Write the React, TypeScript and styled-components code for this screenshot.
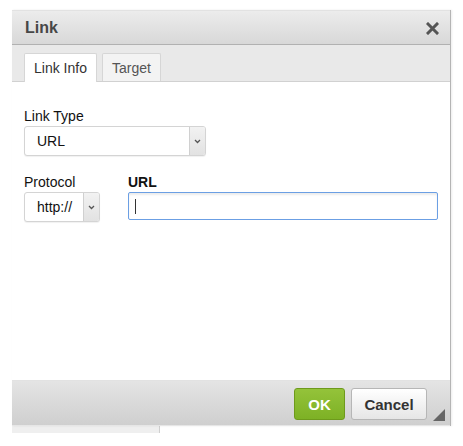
import React from "react";
import styled, { createGlobalStyle } from "styled-components";

const Global = createGlobalStyle`
  html, body { margin: 0; padding: 0; background: #fff; }
  body { font-family: "Liberation Sans", Arial, sans-serif; }
`;

const Page = styled.div`
  padding: 10px 0 0 12px;
`;

const Dialog = styled.div`
  position: relative;
  width: 438px;
  border-right: 1px solid #b4b4b4;
  box-shadow: 1px 0 2px rgba(0, 0, 0, 0.08);
  display: flex;
  flex-direction: column;
`;

const TitleBar = styled.div`
  height: 33px;
  border-top: 1px solid #e2e2e2;
  border-bottom: 1px solid #b1b1b1;
  background: linear-gradient(#ececec, #d8d8d8);
  display: flex;
  align-items: center;
  justify-content: space-between;
  padding: 0 11px 0 13px;
`;

const Title = styled.div`
  font-size: 16px;
  font-weight: bold;
  color: #474747;
  margin-top: 1px;
`;

const Close = styled.svg`
  width: 13px;
  height: 13px;
  margin-top: 2px;
`;

const TabBar = styled.div`
  height: 29px;
  padding-top: 7px;
  padding-left: 12px;
  background: #e9e9e9;
  border-bottom: 1px solid #d1d1d1;
  display: flex;
  gap: 5px;
  align-items: flex-end;
`;

const Tab = styled.div<{ $active?: boolean }>`
  height: ${(p) => (p.$active ? 29 : 28)}px;
  box-sizing: border-box;
  padding: 0 9px;
  display: flex;
  align-items: center;
  font-size: 14px;
  color: ${(p) => (p.$active ? "#333" : "#555")};
  background: ${(p) => (p.$active ? "#fff" : "#f3f3f3")};
  border: 1px solid #d6d6d6;
  border-bottom: none;
  margin-bottom: ${(p) => (p.$active ? -1 : 0)}px;
  border-radius: 2px 2px 0 0;
  position: relative;
`;

const Body = styled.div`
  height: 296px;
  background: #fff;
  padding: 26px 12px 0 12px;
  box-sizing: border-box;
`;

const Label = styled.div<{ $bold?: boolean }>`
  font-size: 14px;
  line-height: 16px;
  color: #111;
  font-weight: ${(p) => (p.$bold ? "bold" : "normal")};
  margin-bottom: 2px;
`;

const Field = styled.div``;

const Row = styled.div`
  display: flex;
  gap: 28px;
  margin-top: 18px;
`;

const Select = styled.div<{ $w: number }>`
  width: ${(p) => p.$w}px;
  height: 30px;
  box-sizing: border-box;
  border: 1px solid #d4d4d4;
  border-radius: 3px;
  display: flex;
  background: #fff;
  box-shadow: 0 1px 1px rgba(0, 0, 0, 0.06);
  overflow: hidden;
`;

const SelectText = styled.div`
  flex: 1;
  display: flex;
  align-items: center;
  padding-left: 12px;
  font-size: 14px;
  color: #111;
`;

const Arrow = styled.div`
  width: 15px;
  border-left: 1px solid #d0d0d0;
  background: linear-gradient(#f2f2f2, #e2e2e2);
  display: flex;
  align-items: center;
  justify-content: center;
`;

const Input = styled.div`
  width: 310px;
  height: 28px;
  box-sizing: border-box;
  border: 1px solid #6b9fe4;
  border-radius: 2px;
  box-shadow: inset 0 2px 2px rgba(0, 0, 0, 0.08);
  display: flex;
  align-items: center;
  padding-left: 6px;
`;

const Caret = styled.div`
  width: 1px;
  height: 15px;
  background: #333;
`;

const Footer = styled.div`
  border-top: 1px solid #e2e2e2;
  border-bottom: 1px solid #e6e6e6;
  margin-top: 2px;
  height: 44px;
  background: linear-gradient(#e4e4e4, #cfcfcf);
  display: flex;
  align-items: center;
  justify-content: flex-end;
  gap: 6px;
  padding-right: 23px;
  position: relative;
`;

const Button = styled.div<{ $primary?: boolean }>`
  height: 32px;
  box-sizing: border-box;
  border-radius: 3px;
  display: flex;
  align-items: center;
  font-size: 15px;
  font-weight: bold;
  color: ${(p) => (p.$primary ? "#fff" : "#333")};
  border: 1px solid ${(p) => (p.$primary ? "#6e9a1c" : "#b6b6b6")};
  background: ${(p) =>
    p.$primary
      ? "linear-gradient(#94c33a, #7db125)"
      : "linear-gradient(#ffffff, #e6e6e6)"};
  width: ${(p) => (p.$primary ? 51 : 76)}px;
  justify-content: center;
  margin-top: 2px;
`;

const Resizer = styled.div`
  position: absolute;
  right: 5px;
  bottom: 4px;
  width: 0;
  height: 0;
  border-left: 12px solid transparent;
  border-bottom: 12px solid #666;
`;

const Strip = styled.div`
  width: 147px;
  height: 7px;
  background: #efefef;
  border-right: 1px solid #cfcfcf;
`;

const Chevron = () => (
  <svg width="7" height="5" viewBox="0 0 7 5">
    <path d="M1 1 L3.5 3.5 L6 1" fill="none" stroke="#555" strokeWidth="1.3" />
  </svg>
);

export default function App() {
  return (
    <>
      <Global />
      <Page>
        <Dialog>
          <TitleBar>
            <Title>Link</Title>
            <Close viewBox="0 0 13 13">
              <path d="M2 2 L11 11 M11 2 L2 11" stroke="#555" strokeWidth="3" strokeLinecap="square" />
            </Close>
          </TitleBar>
          <TabBar>
            <Tab $active>Link Info</Tab>
            <Tab>Target</Tab>
          </TabBar>
          <Body>
            <Field>
              <Label>Link Type</Label>
              <Select $w={182}>
                <SelectText>URL</SelectText>
                <Arrow>
                  <Chevron />
                </Arrow>
              </Select>
            </Field>
            <Row>
              <Field>
                <Label>Protocol</Label>
                <Select $w={76}>
                  <SelectText>http://</SelectText>
                  <Arrow>
                    <Chevron />
                  </Arrow>
                </Select>
              </Field>
              <Field>
                <Label $bold>URL</Label>
                <Input>
                  <Caret />
                </Input>
              </Field>
            </Row>
          </Body>
          <Footer>
            <Button $primary>OK</Button>
            <Button>Cancel</Button>
            <Resizer />
          </Footer>
        </Dialog>
        <Strip />
      </Page>
    </>
  );
}
